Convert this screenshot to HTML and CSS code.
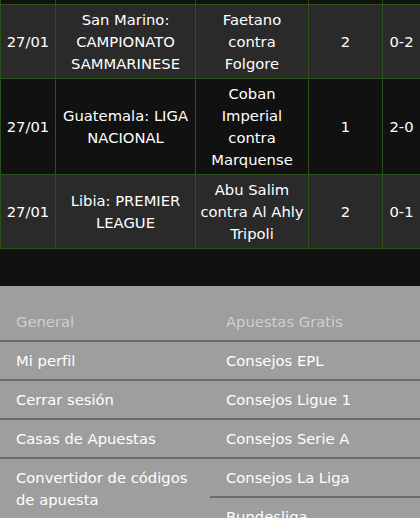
FILE: index.html
```html
<!DOCTYPE html>
<html lang="es">
<head>
<meta charset="utf-8">
<title>Resultados</title>
<link rel="stylesheet" href="styles.css">
</head>
<body>
<table class="results">
  <colgroup>
    <col class="c-date"><col class="c-league"><col class="c-match"><col class="c-tip"><col class="c-score">
  </colgroup>
  <tbody>
    <tr class="cut"><td></td><td></td><td></td><td></td><td></td></tr>
    <tr class="light">
      <td>27/01</td>
      <td>San Marino: CAMPIONATO SAMMARINESE</td>
      <td>Faetano contra Folgore</td>
      <td>2</td>
      <td>0-2</td>
    </tr>
    <tr class="dark">
      <td>27/01</td>
      <td>Guatemala: LIGA NACIONAL</td>
      <td>Coban Imperial contra Marquense</td>
      <td>1</td>
      <td>2-0</td>
    </tr>
    <tr class="light">
      <td>27/01</td>
      <td>Libia: PREMIER LEAGUE</td>
      <td>Abu Salim contra Al Ahly Tripoli</td>
      <td>2</td>
      <td>0-1</td>
    </tr>
  </tbody>
</table>

<footer class="site-footer">
  <ul class="menu">
    <li class="menu-head">General</li>
    <li class="menu-item">Mi perfil</li>
    <li class="menu-item">Cerrar sesión</li>
    <li class="menu-item">Casas de Apuestas</li>
    <li class="menu-item">Convertidor de códigos de apuesta</li>
  </ul>
  <ul class="menu">
    <li class="menu-head">Apuestas Gratis</li>
    <li class="menu-item">Consejos EPL</li>
    <li class="menu-item">Consejos Ligue 1</li>
    <li class="menu-item">Consejos Serie A</li>
    <li class="menu-item">Consejos La Liga</li>
    <li class="menu-item">Bundesliga</li>
  </ul>
</footer>
</body>
</html>
```

FILE: styles.css
```css
html, body {
  margin: 0;
  padding: 0;
}

body {
  background: #111111;
  font-family: "DejaVu Sans", Verdana, sans-serif;
  font-size: 14.75px;
  color: #ffffff;
  width: 420px;
  overflow: hidden;
}

.results {
  width: 420px;
  border-collapse: collapse;
  table-layout: fixed;
}

.c-date { width: 55px; }
.c-league { width: 140px; }
.c-match { width: 113px; }
.c-tip { width: 74px; }
.c-score { width: 38px; }

.results td {
  border: 1px solid #2b5219;
  text-align: center;
  vertical-align: middle;
  line-height: 22px;
  padding: 4px 3px 3px;
}

.results .cut td {
  border-top: hidden;
  height: 4px;
  padding: 0;
  line-height: 0;
}

.results .light td { background: #2a2a2a; }
.results .dark td,
.results .cut td { background: #111111; }

.site-footer {
  margin-top: 37px;
  background: #9e9e9e;
  display: grid;
  grid-template-columns: 210px 210px;
  padding-top: 17px;
}

.menu {
  list-style: none;
  margin: 0;
  padding: 0;
}

.menu-head,
.menu-item {
  padding: 8px 16px 7px;
  line-height: 22px;
  border-bottom: 2px solid #6c6c6c;
}

.menu-head {
  color: #cfcfcf;
}

.menu-item {
  color: #ffffff;
}
```
